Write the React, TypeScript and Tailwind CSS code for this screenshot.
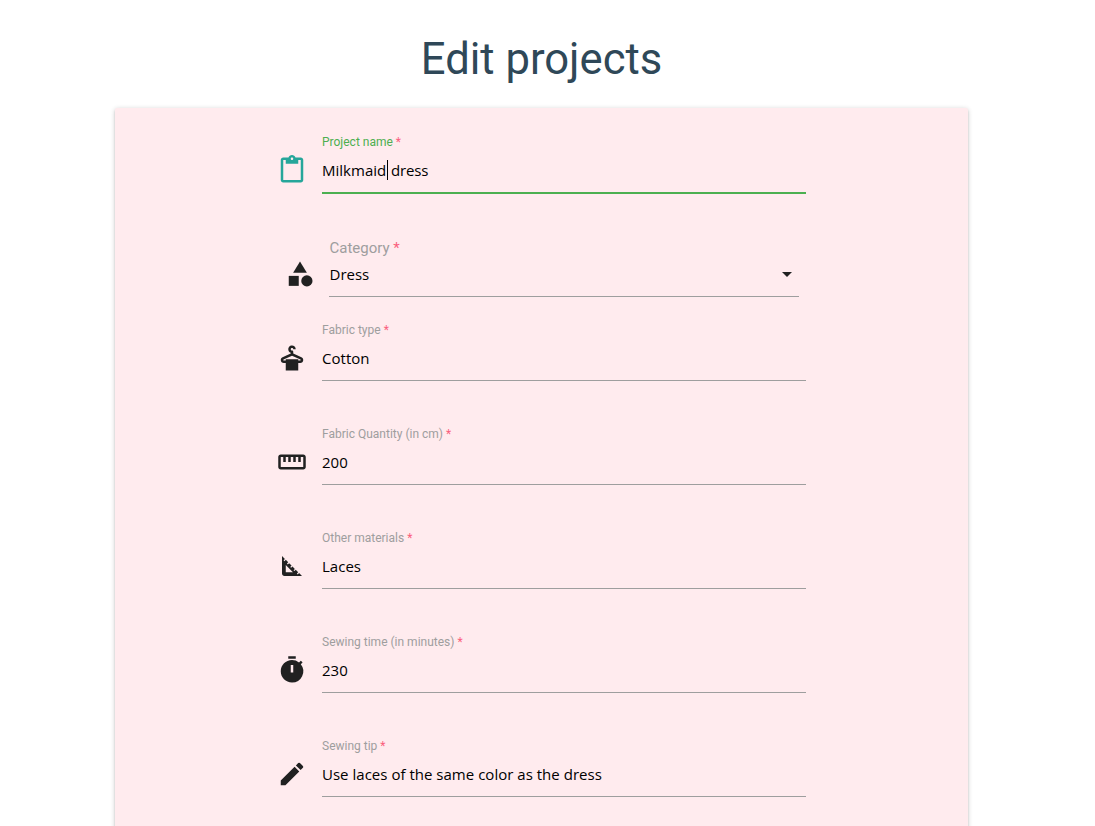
import { ReactNode } from "react";
import { MdCategory, MdContentPaste, MdDryCleaning, MdEdit, MdSquareFoot, MdStraighten } from "react-icons/md";

function TimerIcon() {
  return (
    <svg viewBox="0 0 24 24" className="size-[30px]" fill="currentColor">
      <path d="M9 1h6v2H9zm10.03 6.39 1.42-1.42c-.43-.51-.9-.99-1.41-1.41l-1.42 1.42A8.96 8.96 0 0 0 12 4c-4.97 0-9 4.03-9 9s4.02 9 9 9a8.994 8.994 0 0 0 7.03-14.61zM13 14h-2V8h2v6z" />
    </svg>
  );
}

type FieldProps = { label: string; icon: ReactNode; children: ReactNode; active?: boolean };

function Field({ label, icon, children, active = false }: FieldProps) {
  return (
    <div className="flex h-[104px] w-[530px]">
      <div className={active ? "mt-[21px] w-[46px] pl-px text-[#26a69a]" : "mt-[21px] w-[46px] pl-px text-[#212121]"}>{icon}</div>
      <div className="flex-1">
        <div className={active ? "h-4 text-[12px] leading-4 text-[#4caf50]" : "h-4 text-[12px] leading-4 text-[#9e9e9e]"}>
          {label} <span className="text-[#fa5f7d]">*</span>
        </div>
        <div
          className={
            active
              ? "-mt-[5px] flex h-[49px] items-center border-b-2 border-[#4caf50] pt-[3px] font-['Open_Sans',sans-serif] text-[15px] tracking-[0.02px] text-black"
              : "-mt-[5px] flex h-12 items-center border-b border-[#9e9e9e] pt-[3px] font-['Open_Sans',sans-serif] text-[15px] tracking-[0.02px] text-black"
          }
        >
          {children}
        </div>
      </div>
    </div>
  );
}

export default function App() {
  return (
    <div className="h-[826px] overflow-hidden bg-white font-[Roboto,sans-serif]">
      <h1 className="ml-[115px] h-[108px] w-[853px] pt-[35px] text-center text-[43.6px] leading-[50px] text-[#2f4858]">
        Edit projects
      </h1>
      <main className="ml-[115px] h-[760px] w-[853px] rounded-[2px] bg-[#ffebee] pt-[26px] pl-[161px] shadow-[0_2px_2px_0_rgba(0,0,0,0.14),0_3px_1px_-2px_rgba(0,0,0,0.12),0_1px_5px_0_rgba(0,0,0,0.2)]">
        <Field label="Project name" icon={<MdContentPaste size={30} />} active>
          <span>Milkmaid</span>
          <span className="ml-px h-5 w-px bg-black" />
          <span className="-ml-px whitespace-pre tracking-[-0.15px]"> dress</span>
        </Field>
        <div className="ml-[7px] flex h-[84px] w-[516px]">
          <div className="mt-[21px] w-[46px] pl-[1.5px] text-[#212121]">
            <MdCategory size={30} />
          </div>
          <div className="flex-1">
            <div className="h-5 pl-[0.5px] text-[15px] leading-5 text-[#9e9e9e]">
              Category <span className="text-[#fa5f7d]">*</span>
            </div>
            <div className="flex h-[39px] items-center justify-between border-b border-[#9e9e9e] pb-[5px] font-['Open_Sans',sans-serif] text-[15px] text-black">
              <span className="pl-[0.5px]">Dress</span>
              <svg viewBox="0 0 24 24" className="mb-[2px] size-6" fill="#212121">
                <path d="M7 10l5 5 5-5z" />
              </svg>
            </div>
          </div>
        </div>
        <Field label="Fabric type" icon={<MdDryCleaning size={30} />}>Cotton</Field>
        <Field label="Fabric Quantity (in cm)" icon={<MdStraighten size={30} />}>200</Field>
        <Field label="Other materials" icon={<MdSquareFoot size={30} />}>Laces</Field>
        <Field label="Sewing time (in minutes)" icon={<TimerIcon />}>230</Field>
        <Field label="Sewing tip" icon={<MdEdit size={30} />}>Use laces of the same color as the dress</Field>
      </main>
    </div>
  );
}
